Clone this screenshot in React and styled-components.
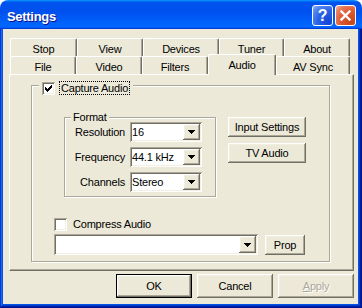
import React from 'react';
import styled, { createGlobalStyle } from 'styled-components';

const face = '#ECE9D8';
const light = '#F1EFE2';
const shadow = '#ACA899';
const dark = '#716F64';

const raised = `inset -1px -1px ${dark}, inset 1px 1px #fff, inset -2px -2px ${shadow}, inset 2px 2px ${light}`;
const sunken = `inset 1px 1px ${shadow}, inset -1px -1px #fff, inset 2px 2px ${dark}, inset -2px -2px ${light}`;

const Global = createGlobalStyle`
  html, body { margin: 0; padding: 0; background: #fff; }
  body { font-family: "Liberation Sans", Arial, sans-serif; font-size: 11px; letter-spacing: -0.2px; color: #000; }
  * { box-sizing: border-box; }
`;

const Window = styled.div`
  width: 362px;
  height: 308px;
  display: flex;
  flex-direction: column;
  border-radius: 8px 8px 0 0;
  overflow: hidden;
`;

const TitleBar = styled.div`
  height: 29px;
  flex: none;
  display: flex;
  align-items: flex-start;
  gap: 2px;
  padding: 5px 6px 0 7px;
  background: linear-gradient(180deg, #0997ff, #0053ee 8%, #0050ee 40%, #0066ff 88%, #0066ff 93%, #005bff 95%, #003dd7 96%, #003dd7);
`;

const Title = styled.span`
  flex: 1;
  margin-top: 4px;
  font: bold 13px/15px "Liberation Sans", Arial, sans-serif;
  letter-spacing: -0.3px;
  color: #fff;
  text-shadow: 1px 1px #0f1089;
`;

const CapButton = styled.span`
  width: 21px;
  height: 21px;
  flex: none;
  border: 1px solid #fff;
  border-radius: 3px;
  display: flex;
  align-items: center;
  justify-content: center;
  color: #fff;
  font: bold 16px/1 "Liberation Sans", Arial, sans-serif;
  background: ${p => p.$close
    ? 'radial-gradient(circle at 85% 85%, #c94418 0%, #de5a33 50%, #e9805f 80%, #f5b9a3 100%)'
    : 'radial-gradient(circle at 85% 85%, #1345d6 0%, #2a62e6 50%, #5588f0 80%, #9db9f5 100%)'};
`;

const Frame = styled.div`
  flex: 1;
  display: flex;
  padding: 0 4px 4px 3px;
  background: #0855dd;
  box-shadow: inset -1px -1px #00138c, inset 1px 0 #0831d9, inset -2px -2px #001ea0, inset 2px 0 #166aee, inset -3px -3px #003bda;
`;

const Body = styled.div`
  flex: 1;
  display: flex;
  flex-direction: column;
  background: ${face};
  padding: 9px 4px 6px 6px;
`;

const TabStrip = styled.div`
  display: flex;
  flex-direction: column;
  padding-left: 1px;
`;

const TabRow = styled.div`
  display: flex;
  align-items: flex-end;
  height: 18px;
`;

const Tab = styled.div`
  position: relative;
  z-index: ${p => (p.$active ? 2 : 1)};
  width: ${p => p.$w}px;
  height: ${p => (p.$active ? 21 : 18)}px;
  margin-bottom: ${p => (p.$active ? -1 : 0)}px;
  display: flex;
  align-items: center;
  justify-content: center;
  padding-top: ${p => (p.$active ? 0 : 2)}px;
  padding-bottom: ${p => (p.$active ? 1 : 0)}px;
  background: ${face};
  border-top: 1px solid #fff;
  border-left: 1px solid #fff;
  border-right: 1px solid ${dark};
  border-radius: 2px 2px 0 0;
  box-shadow: inset -1px 0 ${shadow};
  line-height: 12px;
  white-space: nowrap;
`;

const Panel = styled.div`
  height: 197px;
  flex: none;
  border: 1px solid;
  border-color: #fff ${dark} ${dark} #fff;
  box-shadow: inset -1px -1px ${shadow};
  padding: 10px 0 0 21px;
`;

const GroupBox = styled.div`
  width: ${p => p.$w}px;
  height: ${p => p.$h}px;
  flex: none;
  display: flex;
  flex-direction: column;
  align-items: flex-start;
  border: 1px solid ${shadow};
  box-shadow: inset 1px 1px #fff, 1px 1px #fff;
`;

const Caption = styled.div`
  display: flex;
  align-items: center;
  margin: ${p => p.$top}px 0 0 ${p => p.$left}px;
  padding: 0 ${p => p.$padR}px 0 ${p => p.$padL}px;
  background: ${face};
  line-height: 12px;
`;

const CheckBox = styled.span`
  width: 13px;
  height: 13px;
  flex: none;
  display: flex;
  align-items: center;
  justify-content: center;
  background: #fff;
  box-shadow: ${sunken};
`;

const CheckLabel = styled.span`
  margin-left: 4px;
  padding: 0 1px;
  line-height: 12px;
  border: 1px dotted ${p => (p.$focused ? '#000' : 'transparent')};
  white-space: nowrap;
`;

const Row = styled.div`
  display: flex;
  align-items: ${p => p.$align || 'flex-start'};
  margin: ${p => p.$top || 0}px 0 0 ${p => p.$left || 0}px;
  gap: ${p => p.$gap || 0}px;
`;

const FieldGrid = styled.div`
  display: grid;
  grid-template-columns: 60px 72px;
  grid-auto-rows: 20px;
  column-gap: 5px;
  row-gap: 5px;
  margin-top: -1px;
  padding-bottom: 4px;
`;

const FieldLabel = styled.label`
  align-self: center;
  text-align: right;
  white-space: nowrap;
`;

const Combo = styled.div`
  width: ${p => p.$w}px;
  height: ${p => p.$h}px;
  display: flex;
  align-items: stretch;
  padding: 2px;
  background: #fff;
  box-shadow: ${sunken};
`;

const ComboText = styled.span`
  flex: 1;
  display: flex;
  align-items: center;
  white-space: nowrap;
`;

const DropButton = styled.span`
  width: 17px;
  flex: none;
  display: flex;
  align-items: center;
  justify-content: center;
  background: ${face};
  box-shadow: ${raised};
`;

const ButtonColumn = styled.div`
  display: flex;
  flex-direction: column;
  gap: 6px;
  margin-left: 12px;
`;

const Button = styled.button`
  width: ${p => p.$w}px;
  height: ${p => p.$h}px;
  flex: none;
  padding: 0;
  font: 11px "Liberation Sans", Arial, sans-serif;
  letter-spacing: -0.2px;
  color: ${p => (p.disabled ? shadow : '#000')};
  text-shadow: ${p => (p.disabled ? '1px 1px #fff' : 'none')};
  background: ${face};
  border: ${p => (p.$default ? '1px solid #000' : 'none')};
  box-shadow: ${raised};
  cursor: default;
  white-space: nowrap;
`;

const Mnemonic = styled.span`
  text-decoration: underline;
`;

const Footer = styled.div`
  display: flex;
  justify-content: flex-end;
  gap: 5px;
  margin-top: 3px;
`;

const TABS = [
  [
    { label: 'Stop', w: 67 },
    { label: 'View', w: 66 },
    { label: 'Devices', w: 76 },
    { label: 'Tuner', w: 65 },
    { label: 'About', w: 66 },
  ],
  [
    { label: 'File', w: 66 },
    { label: 'Video', w: 66 },
    { label: 'Filters', w: 66 },
    { label: 'Audio', w: 68, active: true },
    { label: 'AV Sync', w: 74 },
  ],
];

const FIELDS = [
  ['Resolution', '16'],
  ['Frequency', '44.1 kHz'],
  ['Channels', 'Stereo'],
];

const Arrow = () => (
  <svg width="7" height="4" viewBox="0 0 7 4" shapeRendering="crispEdges">
    <path d="M0 0h7v1h-7z M1 1h5v1h-5z M2 2h3v1h-3z M3 3h1v1h-1z" fill="#000" />
  </svg>
);

const Check = () => (
  <svg width="7" height="7" viewBox="0 0 7 7" shapeRendering="crispEdges">
    <path
      d="M6 0h1v1h-1z M5 1h2v1h-2z M0 2h1v1h-1z M4 2h3v1h-3z M0 3h2v1h-2z M3 3h3v1h-3z M0 4h5v1h-5z M1 5h3v1h-3z M2 6h1v1h-1z"
      fill="#000"
    />
  </svg>
);

const CloseGlyph = () => (
  <svg width="11" height="11" viewBox="0 0 11 11">
    <path d="M1.5 1.5 L9.5 9.5 M9.5 1.5 L1.5 9.5" stroke="#fff" strokeWidth="2.4" strokeLinecap="square" />
  </svg>
);

const ComboBox = ({ value, w, h }) => (
  <Combo $w={w} $h={h}>
    <ComboText>{value}</ComboText>
    <DropButton>
      <Arrow />
    </DropButton>
  </Combo>
);

export default function App() {
  return (
    <>
      <Global />
      <Window>
        <TitleBar>
          <Title>Settings</Title>
          <CapButton>?</CapButton>
          <CapButton $close>
            <CloseGlyph />
          </CapButton>
        </TitleBar>
        <Frame>
          <Body>
            <TabStrip>
              {TABS.map((row, i) => (
                <TabRow key={i}>
                  {row.map(t => (
                    <Tab key={t.label} $w={t.w} $active={t.active}>
                      {t.label}
                    </Tab>
                  ))}
                </TabRow>
              ))}
            </TabStrip>
            <Panel>
              <GroupBox $w={299} $h={177}>
                <Caption $top={-5} $left={7} $padL={3} $padR={3}>
                  <CheckBox>
                    <Check />
                  </CheckBox>
                  <CheckLabel $focused>Capture Audio</CheckLabel>
                </Caption>
                <Row $top={22} $left={32}>
                  <GroupBox $w={152} $h={80}>
                    <Caption $top={-7} $left={6} $padL={2} $padR={2}>
                      Format
                    </Caption>
                    <FieldGrid>
                      {FIELDS.map(([label, value]) => (
                        <React.Fragment key={label}>
                          <FieldLabel>{label}</FieldLabel>
                          <ComboBox value={value} w={72} h={20} />
                        </React.Fragment>
                      ))}
                    </FieldGrid>
                  </GroupBox>
                  <ButtonColumn>
                    <Button $w={78} $h={20}>Input Settings</Button>
                    <Button $w={78} $h={20}>TV Audio</Button>
                  </ButtonColumn>
                </Row>
                <Row $top={20} $left={22} $align="center">
                  <CheckBox />
                  <CheckLabel>Compress Audio</CheckLabel>
                </Row>
                <Row $top={3} $left={22} $align="center" $gap={7}>
                  <ComboBox value="" w={204} h={21} />
                  <Button $w={40} $h={20}>Prop</Button>
                </Row>
              </GroupBox>
            </Panel>
            <Footer>
              <Button $w={76} $h={24} $default>OK</Button>
              <Button $w={76} $h={24}>Cancel</Button>
              <Button $w={76} $h={24} disabled>
                <Mnemonic>A</Mnemonic>pply
              </Button>
            </Footer>
          </Body>
        </Frame>
      </Window>
    </>
  );
}
